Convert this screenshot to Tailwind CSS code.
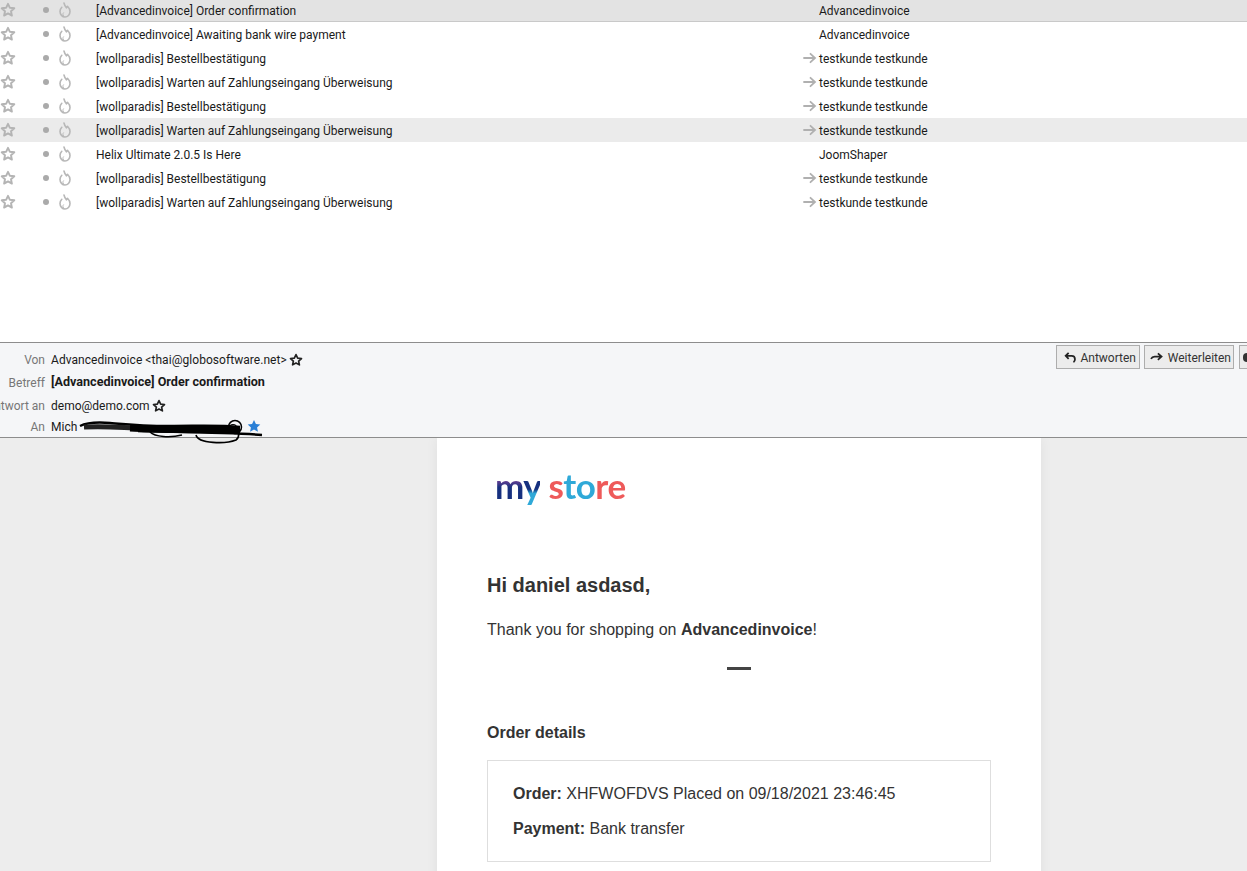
<!DOCTYPE html>
<html><head><meta charset="utf-8"><script src="https://cdn.jsdelivr.net/npm/@tailwindcss/browser@4"></script></head>
<body class="bg-white">
<svg class="hidden"><defs>
<symbol id="star" viewBox="0 0 16 16"><path d="M8 1.800l1.900 4 4.400.5-3.300 3 .9 4.300L8 11.400l-3.900 2.200.9-4.300-3.300-3 4.400-.5z" fill="none" stroke="currentColor" stroke-width="1.900" stroke-linejoin="round"/></symbol>
<symbol id="fire" viewBox="0 0 16 16"><path d="M7 1c.6 2.600 1.200 3.600 2.500 4.800l1-1.500c1.500 1.500 2.500 3.200 2.500 5.200 0 3.200-2.300 5.500-5 5.500S3 12.500 3 9.500C3 7.800 3.700 6.400 4.800 5.300" fill="none" stroke="currentColor" stroke-width="1.600" stroke-linecap="round" stroke-linejoin="round"/><path d="M7 14c-1.200-.8-1.500-2.200-.3-3.500" fill="none" stroke="currentColor" stroke-width="1"/></symbol>
<symbol id="arrow" viewBox="0 0 14 12"><path d="M1 6h10.500M7.500 1.800L12 6l-4.500 4.200" fill="none" stroke="currentColor" stroke-width="1.800" stroke-linecap="round"/></symbol>
</defs></svg>
<div class="w-[1247px] h-[871px] overflow-hidden flex flex-col font-['Roboto',sans-serif]">
<div class="h-[344px] -mt-[2px] shrink-0 text-[12px] text-[#1a1a1a]">
<div class="h-[24px] flex items-center bg-[#e3e3e3] border-b border-[#c9c9c9]"><svg class="w-4 h-4 text-[#b4b4b4]"><use href="#star"/></svg><span class="w-[6px] h-[6px] rounded-full bg-[#aaa] ml-[27px]"></span><svg class="w-4 h-4 ml-[8px] text-[#b8b8b8]"><use href="#fire"/></svg><span class="ml-[23px] pt-[3px] w-[723px] whitespace-nowrap">[Advancedinvoice] Order confirmation</span><span class="pt-[3px]">Advancedinvoice</span></div>
<div class="h-[24px] flex items-center"><svg class="w-4 h-4 text-[#b4b4b4]"><use href="#star"/></svg><span class="w-[6px] h-[6px] rounded-full bg-[#aaa] ml-[27px]"></span><svg class="w-4 h-4 ml-[8px] text-[#b8b8b8]"><use href="#fire"/></svg><span class="ml-[23px] pt-[2px] w-[723px] whitespace-nowrap">[Advancedinvoice] Awaiting bank wire payment</span><span class="pt-[2px]">Advancedinvoice</span></div>
<div class="h-[24px] flex items-center"><svg class="w-4 h-4 text-[#b4b4b4]"><use href="#star"/></svg><span class="w-[6px] h-[6px] rounded-full bg-[#aaa] ml-[27px]"></span><svg class="w-4 h-4 ml-[8px] text-[#b8b8b8]"><use href="#fire"/></svg><span class="ml-[23px] pt-[2px] w-[707px] whitespace-nowrap">[wollparadis] Bestellbestätigung</span><svg class="w-[14px] h-[12px] mr-[2px] text-[#b0b0b0]"><use href="#arrow"/></svg><span class="pt-[2px]">testkunde testkunde</span></div>
<div class="h-[24px] flex items-center"><svg class="w-4 h-4 text-[#b4b4b4]"><use href="#star"/></svg><span class="w-[6px] h-[6px] rounded-full bg-[#aaa] ml-[27px]"></span><svg class="w-4 h-4 ml-[8px] text-[#b8b8b8]"><use href="#fire"/></svg><span class="ml-[23px] pt-[2px] w-[707px] whitespace-nowrap">[wollparadis] Warten auf Zahlungseingang Überweisung</span><svg class="w-[14px] h-[12px] mr-[2px] text-[#b0b0b0]"><use href="#arrow"/></svg><span class="pt-[2px]">testkunde testkunde</span></div>
<div class="h-[24px] flex items-center"><svg class="w-4 h-4 text-[#b4b4b4]"><use href="#star"/></svg><span class="w-[6px] h-[6px] rounded-full bg-[#aaa] ml-[27px]"></span><svg class="w-4 h-4 ml-[8px] text-[#b8b8b8]"><use href="#fire"/></svg><span class="ml-[23px] pt-[2px] w-[707px] whitespace-nowrap">[wollparadis] Bestellbestätigung</span><svg class="w-[14px] h-[12px] mr-[2px] text-[#b0b0b0]"><use href="#arrow"/></svg><span class="pt-[2px]">testkunde testkunde</span></div>
<div class="h-[24px] flex items-center bg-[#ebebeb]"><svg class="w-4 h-4 text-[#b4b4b4]"><use href="#star"/></svg><span class="w-[6px] h-[6px] rounded-full bg-[#aaa] ml-[27px]"></span><svg class="w-4 h-4 ml-[8px] text-[#b8b8b8]"><use href="#fire"/></svg><span class="ml-[23px] pt-[2px] w-[707px] whitespace-nowrap">[wollparadis] Warten auf Zahlungseingang Überweisung</span><svg class="w-[14px] h-[12px] mr-[2px] text-[#b0b0b0]"><use href="#arrow"/></svg><span class="pt-[2px]">testkunde testkunde</span></div>
<div class="h-[24px] flex items-center"><svg class="w-4 h-4 text-[#b4b4b4]"><use href="#star"/></svg><span class="w-[6px] h-[6px] rounded-full bg-[#aaa] ml-[27px]"></span><svg class="w-4 h-4 ml-[8px] text-[#b8b8b8]"><use href="#fire"/></svg><span class="ml-[23px] pt-[2px] w-[723px] whitespace-nowrap">Helix Ultimate 2.0.5 Is Here</span><span class="pt-[2px]">JoomShaper</span></div>
<div class="h-[24px] flex items-center"><svg class="w-4 h-4 text-[#b4b4b4]"><use href="#star"/></svg><span class="w-[6px] h-[6px] rounded-full bg-[#aaa] ml-[27px]"></span><svg class="w-4 h-4 ml-[8px] text-[#b8b8b8]"><use href="#fire"/></svg><span class="ml-[23px] pt-[2px] w-[707px] whitespace-nowrap">[wollparadis] Bestellbestätigung</span><svg class="w-[14px] h-[12px] mr-[2px] text-[#b0b0b0]"><use href="#arrow"/></svg><span class="pt-[2px]">testkunde testkunde</span></div>
<div class="h-[24px] flex items-center"><svg class="w-4 h-4 text-[#b4b4b4]"><use href="#star"/></svg><span class="w-[6px] h-[6px] rounded-full bg-[#aaa] ml-[27px]"></span><svg class="w-4 h-4 ml-[8px] text-[#b8b8b8]"><use href="#fire"/></svg><span class="ml-[23px] pt-[2px] w-[707px] whitespace-nowrap">[wollparadis] Warten auf Zahlungseingang Überweisung</span><svg class="w-[14px] h-[12px] mr-[2px] text-[#b0b0b0]"><use href="#arrow"/></svg><span class="pt-[2px]">testkunde testkunde</span></div>
</div>
<div class="h-[96px] shrink-0 relative z-10 bg-[#f5f6f8] border-y border-[#8d8d8d] text-[12px] text-[#1a1a1a]">
<div class="grid grid-cols-[45px_1fr] gap-x-[6px] pt-[5px] grid-rows-[23px_23px_23px_19px] items-center whitespace-nowrap">
<span class="text-right text-[#777]">Von</span><span class="flex items-center gap-[2px] tracking-[0.05px]">Advancedinvoice &lt;thai@globosoftware.net&gt;<svg class="w-[14px] h-[14px] text-[#222]"><use href="#star"/></svg></span>
<span class="text-right text-[#777]">Betreff</span><span class="font-bold text-[12.600px]">[Advancedinvoice] Order confirmation</span>
<span class="text-right text-[#777] flex justify-end overflow-hidden">Antwort&nbsp;an</span><span class="flex items-center gap-[2px]">demo@demo.com<svg class="w-[14px] h-[14px] text-[#222]"><use href="#star"/></svg></span>
<span class="text-right text-[#777]">An</span><span class="flex items-center">Mich</span>
</div>
<div class="absolute left-[1056px] top-[2px] flex gap-[4px]">
<div class="h-[24px] w-[84px] border border-[#adadad] bg-[#ececec] flex items-center justify-end pr-[3px] pt-[2px] gap-[3px] text-[#333]"><svg viewBox="0 0 14 14" class="w-[13px] h-[13px] -mt-[2px]"><path d="M5 2L1.800 5.200 5 8.400M2.200 5.200h6c2.600 0 3.600 1.800 3.600 3.600 0 1.400-.6 2.600-1.600 3.200" fill="none" stroke="#222" stroke-width="1.900"/></svg>Antworten</div>
<div class="h-[24px] w-[90px] border border-[#adadad] bg-[#ececec] flex items-center justify-end pr-[2px] pt-[2px] gap-[5px] text-[#333]"><svg viewBox="0 0 14 12" class="w-[13px] h-[11px] -mt-[2px]"><path d="M1 7.500c1-2 2.500-2.500 4-2.500h7M8.500 1.500L12.500 5 8.500 8.500" fill="none" stroke="#222" stroke-width="1.900"/></svg>Weiterleiten</div>
<div class="h-[24px] w-[20px] border border-[#adadad] bg-[#ececec] flex items-center pl-[3px] ml-[1px]"><span class="w-[8px] h-[9px] rounded-sm bg-[#333]"></span></div>
</div>
<svg class="absolute left-[78px] top-[74px] w-[190px] h-[30px]" viewBox="0 0 190 30"><path d="M2 9c8-4 18-4 30-3s30 3 60 3 50-1 70 1" fill="none" stroke="#000" stroke-width="2.500"/><path d="M6 10c20-1 30 0 50 1" fill="none" stroke="#222" stroke-width="5"/><path d="M52 11c30 1 50 2 110 2" fill="none" stroke="#000" stroke-width="7"/><path d="M60 14c30 1 90 1 124 4" fill="none" stroke="#000" stroke-width="2.500"/><path d="M72 15c5 5 20 6 32 3" fill="none" stroke="#000" stroke-width="1.600"/><circle cx="157" cy="10" r="6.500" fill="none" stroke="#000" stroke-width="1.500"/><circle cx="155" cy="11" r="3.500" fill="none" stroke="#000" stroke-width="1.200"/><path d="M118 18c2 9 30 9 40 5 4-3 3-9 1-13" fill="none" stroke="#000" stroke-width="1.600"/></svg>
<svg viewBox="0 0 16 16" class="absolute left-[247px] top-[76px] w-[14px] h-[14px]"><path d="M8 1l2.200 4.600 5 .6-3.700 3.400 1 5L8 12.100 3.500 14.600l1-5L.8 6.200l5-.6z" fill="#2a7fd6"/></svg>
</div>
<div class="flex-1 bg-[#ededed] min-h-0 overflow-hidden pl-[437px]">
<div class="w-[604px] h-[600px] bg-white shadow-[0_0_12px_rgba(0,0,0,0.06)] px-[50px] font-['Liberation_Sans',sans-serif] text-[#333]">
<div class="h-[129px] pl-[8px] pt-[22px] text-[35px] leading-[50px] font-['Lato',sans-serif] font-bold tracking-[-0.5px] blur-[0.5px] whitespace-nowrap"><span class="text-transparent bg-clip-text bg-linear-to-b from-[#7a3f9a] from-35% to-[#16307f] to-55%">m</span><span class="text-transparent bg-clip-text bg-linear-to-b from-[#16307f] from-60% to-[#2fa9d8] to-70%">y</span> <span class="text-[#ee5a5a]">s</span><span class="text-[#2fa9d8]">to</span><span class="text-[#ee5a5a]">re</span></div>
<h1 class="text-[20px] font-bold leading-[36px]">Hi daniel asdasd,</h1>
<p class="text-[16px] leading-[24px] mt-[15px]">Thank you for shopping on <b>Advancedinvoice</b>!</p>
<div class="w-[24px] h-[3px] bg-[#444] mx-auto mt-[25px]"></div>
<h2 class="text-[16px] font-bold leading-[24px] mt-[51px]">Order details</h2>
<div class="border border-[#dedede] h-[102px] mt-[15px] px-[25px] pt-[21px] text-[16px] leading-[24px]">
<p><b>Order:</b> XHFWOFDVS Placed on 09/18/2021 23:46:45</p>
<p class="mt-[11px]"><b>Payment:</b> Bank transfer</p>
</div>
</div>
</div>
</div>
</body></html>
